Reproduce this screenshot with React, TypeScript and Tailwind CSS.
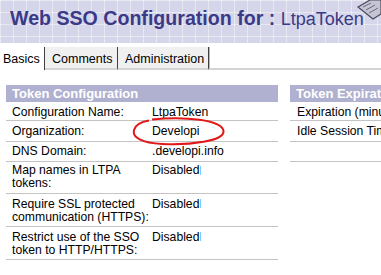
import React from 'react';

// Web SSO configuration form (Domino admin style)

const leftRows = [
  { label: 'Configuration Name:', value: 'LtpaToken', pad: 'pt-[4px] pb-[1px]' },
  { label: 'Organization:', value: 'Developi', pad: 'pt-[4px] pb-[3px]' },
  { label: 'DNS Domain:', value: '.developi.info', pad: 'pt-[3px] pb-[3px]' },
  { label: 'Map names in LTPA tokens:', value: 'Disabled', pad: 'pt-[2px] pb-[3px]' },
  { label: 'Require SSL protected communication (HTTPS):', value: 'Disabled', pad: 'pt-[4px] pb-[2px]' },
  { label: 'Restrict use of the SSO token to HTTP/HTTPS:', value: 'Disabled', pad: 'pt-[4px] pb-[2px]' },
];

const rightRows = [
  { label: 'Expiration (minutes):', pad: 'pt-[4px] pb-[1px]' },
  { label: 'Idle Session Timeout:', pad: 'pt-[4px] pb-[3px]' },
  { label: '\u00a0', pad: 'pt-[3px] pb-[3px]' },
];

function SectionBar({ title }: { title: string }) {
  return (
    <div className="h-[17px] bg-[#b0b0d0] pl-[6px] text-[13px] leading-[17px] font-bold text-white whitespace-nowrap overflow-hidden">
      {title}
    </div>
  );
}

function Tabs() {
  return (
    <div className="mt-[4px] flex h-[23px] text-[12.5px] leading-[14px]">
      <div className="w-[45px] border-r border-[#404040] pl-[3px] pt-[5px]">Basics</div>
      <div className="w-[73px] border-r border-b-2 border-r-[#404040] border-b-[#d4d4d4] bg-[#f0f0f0] pl-[7px] pt-[5px]">
        Comments
      </div>
      <div className="w-[91px] border-r border-b-2 border-r-[#404040] border-b-[#d4d4d4] bg-[#f0f0f0] pl-[7px] pt-[5px] shadow-[1px_0_0_#b8b8b8]">
        Administration
      </div>
      <div className="flex-1 border-b-2 border-[#d4d4d4]" />
    </div>
  );
}

export default function App() {
  return (
    <div className="relative h-[275px] w-[381px] overflow-hidden bg-white text-black font-['Liberation_Sans',Arial,sans-serif]">
      {/* header */}
      <div className="relative h-[43px] bg-[#d6d6ea] bg-[linear-gradient(to_right,rgba(255,255,255,0.45)_1px,transparent_1px),linear-gradient(to_bottom,rgba(255,255,255,0.45)_1px,transparent_1px)] bg-[size:13px_12px] pl-[10px] pt-[7px] whitespace-nowrap leading-[22px] text-[#3b3a87]">
        <span className="text-[19.6px] font-bold">Web SSO Configuration for : </span>
        <span className="text-[18px]">LtpaToken</span>
        <svg className="absolute right-0 top-0" width="24" height="20" viewBox="0 0 24 20">
          <path d="M1 7 L13 0 L24 0 L24 14 L16 19 Z" fill="#c4c4d4" stroke="#4a4a5a" strokeWidth="1.2" />
          <path d="M6 7 L14 3 M9 10 L18 5 M12 13 L21 8" stroke="#6a6a7a" strokeWidth="1" />
        </svg>
      </div>

      <Tabs />

      <div className="mt-[15px] flex items-start text-[12.2px] leading-[13px]">
        <div className="ml-[6px] w-[272px] shrink-0">
          <SectionBar title="Token Configuration" />
          {leftRows.map((r) => (
            <div key={r.label} className={`flex border-b border-[#c4c4c4] ${r.pad}`}>
              <div className="w-[150px] shrink-0 pl-[6px]">{r.label}</div>
              <div className="-ml-[4px] flex-1">{r.value}</div>
            </div>
          ))}
        </div>
        <div className="ml-[12px] w-[200px] shrink-0">
          <SectionBar title="Token Expiration" />
          {rightRows.map((r, i) => (
            <div key={i} className={`border-b border-[#c4c4c4] pl-[7px] whitespace-nowrap ${r.pad}`}>
              {r.label}
            </div>
          ))}
        </div>
      </div>

      {/* hand-drawn annotation */}
      <svg className="pointer-events-none absolute left-0 top-0" width="381" height="275">
        <path
          d="M152 119.5 C185 116, 222 120, 223.5 131 C224.5 141, 190 145.5, 162 144 C142 143, 132 137.5, 134 130 C135.5 124.5, 143 121.5, 149 120.5"
          fill="none"
          stroke="#e01818"
          strokeWidth="2"
        />
        <rect x="200" y="166" width="1" height="9" fill="#74d2f6" />
        <rect x="200" y="199" width="1" height="9" fill="#74d2f6" />
        <rect x="200" y="232" width="1" height="9" fill="#74d2f6" />
      </svg>
    </div>
  );
}
